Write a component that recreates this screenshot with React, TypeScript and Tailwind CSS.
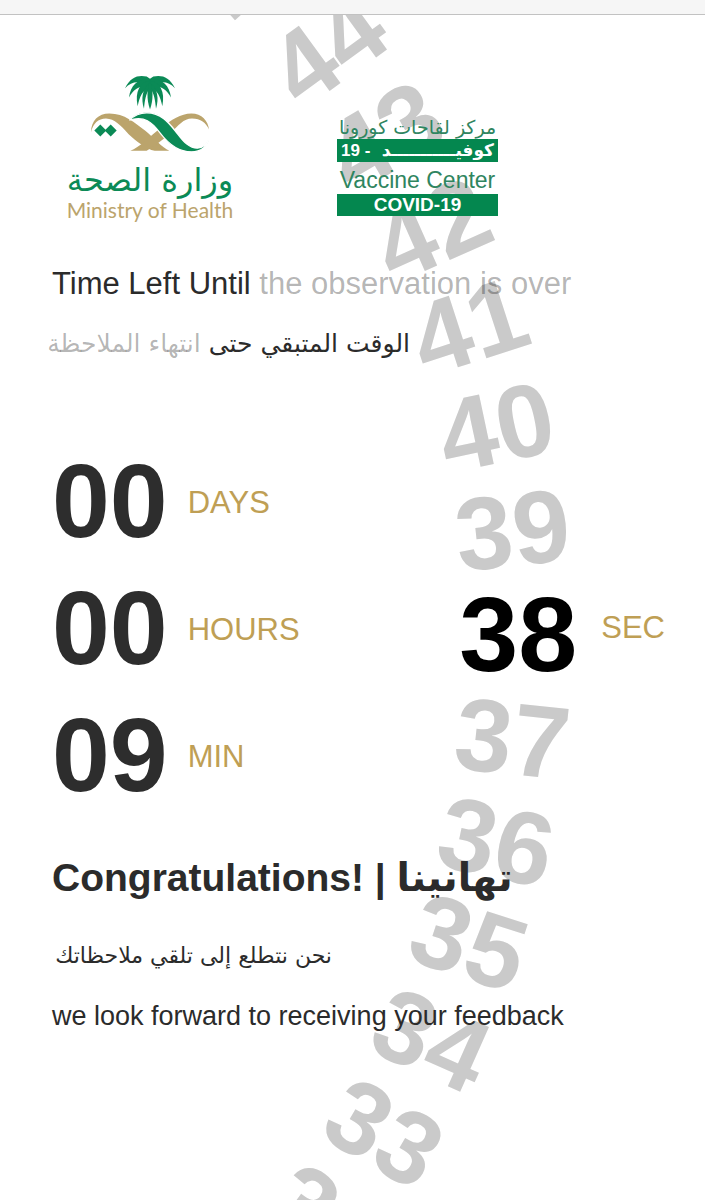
const WHEEL_SECONDS = [45, 44, 43, 42, 41, 40, 39, 37, 36, 35, 34, 33, 32];
const CURRENT_SECOND = 38;
const DEGREES_PER_SECOND = 6;

const LATIN = "font-['Liberation_Sans','DejaVu_Sans',sans-serif]";
const ARABIC = "font-['DejaVu_Sans',sans-serif]";

function Emblem() {
  return (
    <svg viewBox="118 45 360 230" className="h-[77px] w-[120px]" aria-hidden="true">
      <g fill="#bba46c">
        <path d="M121 216C122 182 142 160 176 160C222 160 252 188 284 212C310 234 334 262 356 272H312C286 266 258 244 234 222C210 196 192 176 166 175C142 175 128 190 121 216Z" />
        <path d="M475 208C472 182 454 160 422 160C390 160 362 180 332 202C296 230 266 262 239 272H288C314 256 338 238 360 218C384 196 398 175 424 175C450 175 466 188 475 208Z" />
      </g>
      <path
        d="M236 180C250 166 266 158 288 158C334 158 356 190 380 220C400 246 416 264 440 264C456 263 468 252 475 234C470 258 452 275 422 275C380 275 352 250 328 218C304 186 282 166 236 180Z"
        fill="#0b8a56"
        stroke="#ffffff"
        strokeWidth="4"
      />
      <g fill="#0b8a56">
        <path d="M131 211L149 193L167 211L149 229Z" />
        <path d="M162 211L180 193L198 211L180 229Z" />
        <path d="M298 56L288 49C262 44 240 50 223 84C240 66 258 62 282 70L298 76Z" />
        <path d="M298 56L308 49C334 44 356 50 373 84C356 66 338 62 314 70L298 76Z" />
        <path d="M298 58C266 54 240 72 235 112C248 88 262 78 288 78L298 76Z" />
        <path d="M298 58C330 54 356 72 361 112C348 88 334 78 308 78L298 76Z" />
        <path d="M298 62C268 66 252 94 261 138C267 108 276 92 294 82L298 76Z" />
        <path d="M298 62C328 66 344 94 335 138C329 108 320 92 302 82L298 76Z" />
        <path d="M294 70C276 88 270 114 280 146C282 120 286 100 297 84Z" />
        <path d="M302 70C320 88 326 114 316 146C314 120 310 100 299 84Z" />
        <path d="M298 62C289 88 287 116 298 148C309 116 307 88 298 62Z" />
      </g>
    </svg>
  );
}

function MinistryLogo() {
  return (
    <div className="flex w-[164px] flex-col items-center">
      <Emblem />
      <p dir="rtl" className={`${ARABIC} mt-2 text-[32px] leading-10 whitespace-nowrap text-[#0b8a56]`}>
        وزارة الصحة
      </p>
      <p className="font-['Lato',sans-serif] text-[21px] leading-5 whitespace-nowrap text-[#bba46c]">Ministry of Health</p>
    </div>
  );
}

function VaccineCenterLogo() {
  return (
    <div className="mt-10 flex w-[161px] flex-col text-center whitespace-nowrap">
      <p dir="rtl" className={`${ARABIC} text-[19px] leading-6 text-[#2f8560]`}>
        مركز لقاحات كورونا
      </p>
      <p dir="rtl" className={`${ARABIC} flex h-[23px] items-center justify-between bg-[#04874f] px-1 text-[17px] font-bold text-white`}>
        <span>كوفيـــــــــــد</span>
        <span dir="ltr" className="font-['Liberation_Sans',sans-serif]">19 -</span>
      </p>
      <p className="pt-2 pb-1 text-[23px] leading-5 text-[#2f8560]">Vaccine Center</p>
      <p className="h-[22px] bg-[#04874f] text-[19px] leading-[22px] font-bold text-white">COVID-19</p>
    </div>
  );
}

function CountRow({ value, unit }: { value: string; unit: string }) {
  return (
    <div className="flex h-[127px] items-center gap-5">
      <span className="text-[104px] leading-none font-bold text-[#2d2d2d]">{value}</span>
      <span className="pt-1 text-[31px] leading-10 text-[#bf9f55]">{unit}</span>
    </div>
  );
}

function SecondsWheel() {
  return (
    <div className="flex items-center gap-6">
      <div className="relative mt-3">
        <div aria-hidden="true">
          {WHEEL_SECONDS.map((second) => (
            <span
              key={second}
              className="absolute inset-0 -z-10 flex origin-[-938px_50%] items-center justify-center text-[103px] leading-none font-bold text-[#cacaca]"
              style={{ rotate: `${(CURRENT_SECOND - second) * DEGREES_PER_SECOND}deg` }}
            >
              {second}
            </span>
          ))}
        </div>
        <span className="block text-[106px] leading-none font-bold text-black">{CURRENT_SECOND}</span>
      </div>
      <span className="text-[31px] leading-10 text-[#bf9f55]">SEC</span>
    </div>
  );
}

export default function App() {
  return (
    <div className={`${LATIN} flex min-h-screen flex-col bg-white text-[#2b2b2b]`}>
      <div className="h-[15px] border-b border-[#c2c2c2] bg-[#f6f6f6]" />
      <main className="relative isolate flex grow flex-col overflow-hidden pr-10 pl-[52px]">
        <header className="flex items-start gap-[105px] pt-[60px] pl-4">
          <MinistryLogo />
          <VaccineCenterLogo />
        </header>

        <h1 className="mt-11 text-[31px] leading-10 whitespace-nowrap">
          Time Left Until <span className="text-black/30">the observation is over</span>
        </h1>
        <p dir="rtl" className={`${ARABIC} mt-5 w-[358px] text-[25px] leading-10 whitespace-nowrap`}>
          الوقت المتبقي حتى <span className="text-black/30">انتهاء الملاحظة</span>
        </p>

        <section aria-label="Time left" className="mt-[73px] flex items-center justify-between">
          <div>
            <CountRow value="00" unit="DAYS" />
            <CountRow value="00" unit="HOURS" />
            <CountRow value="09" unit="MIN" />
          </div>
          <SecondsWheel />
        </section>

        <h2 className="mt-[34px] text-[39px] leading-[52px] font-bold whitespace-nowrap">
          Congratulations! | <span className={ARABIC}>تهانينا</span>
        </h2>
        <p dir="rtl" className={`${ARABIC} mt-8 w-[280px] text-[22px] leading-10 whitespace-nowrap`}>
          نحن نتطلع إلى تلقي ملاحظاتك
        </p>
        <p className="mt-5 pb-10 text-[27px] leading-10 whitespace-nowrap">we look forward to receiving your feedback</p>
      </main>
    </div>
  );
}
